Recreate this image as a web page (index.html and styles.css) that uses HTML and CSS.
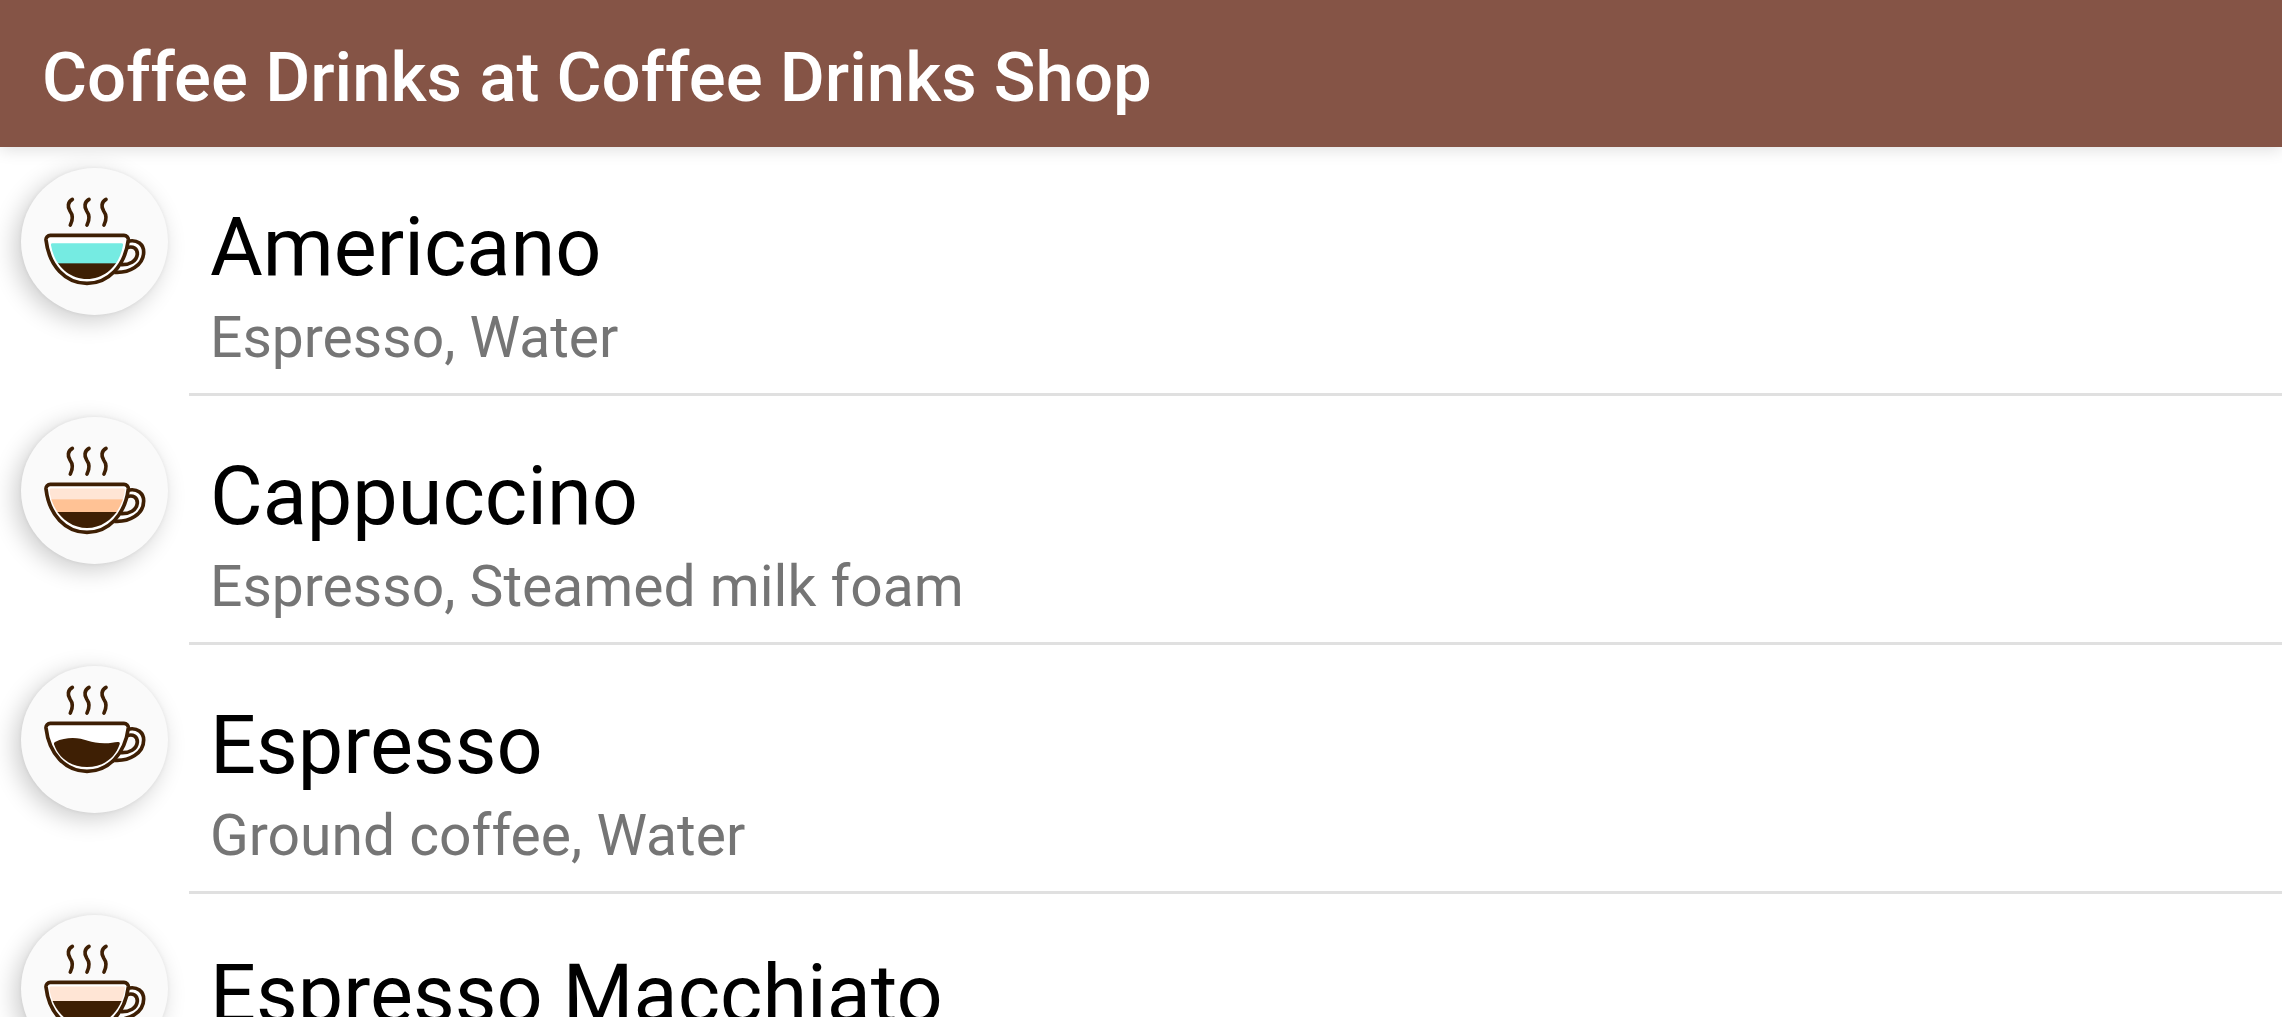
FILE: index.html
```html
<!DOCTYPE html>
<html lang="en">
<head>
<meta charset="utf-8">
<title>Coffee Drinks</title>
<link rel="stylesheet" href="styles.css">
</head>
<body>
<svg class="defs" aria-hidden="true">
  <defs>
    <clipPath id="bowl"><path d="M90 214H307a5 5 0 0 1 5 5C303 286 255 333 198 333S93 286 85 219a5 5 0 0 1 5-5z"/></clipPath>
    <clipPath id="bowl-low"><path d="M95 226H301a5 5 0 0 1 5 6C296 292 252 333 198 333S100 292 90 232a5 5 0 0 1 5-6z"/></clipPath>
    <g id="cup">
      <g class="steam">
        <path id="wisp" d="M154 94C140 102 139 117 147 129C156 141 156 155 148 171"/>
        <use href="#wisp" x="50"/>
        <use href="#wisp" x="101"/>
      </g>
      <g class="line">
        <path class="porcelain" d="M320 220C350 213 368 230 368 252C368 292 325 316 280 313L300 290z" stroke="none"/>
        <path d="M320 220C350 213 368 230 368 252C368 292 325 316 280 313"/>
        <path class="hole" d="M318 239C337 233 349 242 349 258C347 280 325 291 300 290"/>
        <path class="porcelain" d="M88 202H309a13 13 0 0 1 13 14C312 294 262 346 198 346S84 294 75 216a13 13 0 0 1 13-14z"/>
      </g>
    </g>
  </defs>
</svg>
<header class="app-bar"><h1 class="app-title">Coffee Drinks at Coffee Drinks Shop</h1></header>
<main class="content">
  <ul class="drinks">
    <li class="drink">
      <div class="badge"><svg class="icon" viewBox="0 0 441 441" aria-hidden="true">
        <use href="#cup"/>
        <g clip-path="url(#bowl-low)"><rect class="water" x="80" y="220" width="240" height="68"/><rect class="coffee" x="80" y="286" width="240" height="60"/></g>
      </svg></div>
      <div class="info"><h2 class="name">Americano</h2><p class="ingredients">Espresso, Water</p></div>
    </li>
    <li class="drink">
      <div class="badge"><svg class="icon" viewBox="0 0 441 441" aria-hidden="true">
        <use href="#cup"/>
        <g clip-path="url(#bowl)"><rect class="foam" x="80" y="210" width="240" height="40"/><rect class="milk" x="80" y="247" width="240" height="40"/><rect class="coffee" x="80" y="285" width="240" height="60"/></g>
      </svg></div>
      <div class="info"><h2 class="name">Cappuccino</h2><p class="ingredients">Espresso, Steamed milk foam</p></div>
    </li>
    <li class="drink">
      <div class="badge"><svg class="icon" viewBox="0 30 441 441" aria-hidden="true">
        <use href="#cup"/>
        <path class="coffee" d="M102 258C120 249 137 246 155 246C190 246 210 262 250 262C268 262 280 259 290 258Q298 257 296 265C282 308 245 333 198 333S113 308 99 265Q98 260 102 258z"/>
      </svg></div>
      <div class="info"><h2 class="name">Espresso</h2><p class="ingredients">Ground coffee, Water</p></div>
    </li>
    <li class="drink">
      <div class="badge"><svg class="icon" viewBox="0 0 441 441" aria-hidden="true">
        <use href="#cup"/>
        <g clip-path="url(#bowl)"><rect class="foam" x="80" y="210" width="240" height="50"/><rect class="coffee" x="80" y="258" width="240" height="90"/></g>
      </svg></div>
      <div class="info"><h2 class="name">Espresso Macchiato</h2></div>
    </li>
  </ul>
</main>
</body>
</html>
```
FILE: styles.css
```css
* { box-sizing: border-box; margin: 0; padding: 0; }
body {
  height: 100vh;
  display: flex;
  flex-direction: column;
  overflow: hidden;
  background: #fff;
  color: #000;
  font-family: Roboto, sans-serif;
}
.defs { position: absolute; width: 0; height: 0; }
.app-bar {
  z-index: 1;
  flex: none;
  padding: 38px 42px 29px;
  background: #855446;
  color: #fff;
  box-shadow: 0 2px 16px rgba(0, 0, 0, 0.14);
}
.app-title { font-size: 69px; line-height: 80px; font-weight: 500; }
.content { flex: 1; min-height: 0; overflow: hidden; }
.drinks { list-style: none; }
.drink { display: flex; gap: 21px; padding-left: 21px; }
.badge {
  flex: none;
  width: 147px;
  height: 147px;
  margin-top: 21px;
  border-radius: 50%;
  background: #fafafa;
  box-shadow: -6px 6px 24px rgba(0, 0, 0, 0.2), 0 0 4px rgba(0, 0, 0, 0.06);
}
.icon { display: block; width: 100%; height: 100%; }
.info {
  flex: 1;
  min-height: 249px;
  padding: 53px 21px 23px;
  border-bottom: 3px solid #e0e0e0;
}
.name { font-size: 81px; line-height: 96px; font-weight: 400; }
.ingredients { margin-top: 10px; font-size: 57px; line-height: 64px; color: #757575; }
.steam { fill: none; stroke: #3e1f04; stroke-width: 11; stroke-linecap: round; }
.line { fill: none; stroke: #3e1f04; stroke-width: 11; }
.porcelain { fill: #fff; }
.hole { fill: #fafafa; }
.coffee { fill: #3e1f04; }
.water { fill: #75ebe2; }
.foam { fill: #ffe5d5; }
.milk { fill: #ffc295; }
```
